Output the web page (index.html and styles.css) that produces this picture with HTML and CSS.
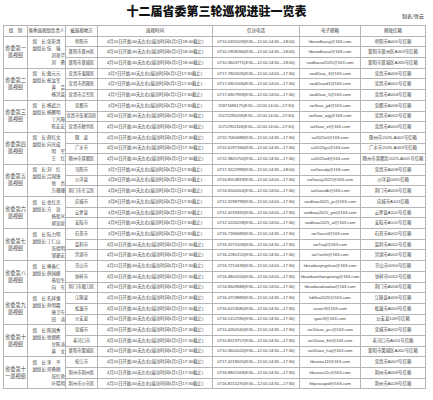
FILE: index.html
```html
<!DOCTYPE html>
<html lang="zh-CN">
<head>
<meta charset="utf-8">
<link rel="stylesheet" href="styles.css">
</head>
<body>
<div class="head">
  <div></div>
  <h1 class="title">十二届省委第三轮巡视进驻一览表</h1>
  <div class="credit">制表/徐云</div>
</div>
<table class="tbl">
  <colgroup>
    <col class="c1"><col class="c2"><col class="c3"><col class="c4"><col class="c5"><col class="c6"><col class="c7">
  </colgroup>
  <thead>
    <tr><th>组　别</th><th>省委巡视组负责人</th><th>被巡视地方</th><th>巡视时间</th><th>信访电话</th><th>电子邮箱</th><th>邮政信箱</th></tr>
  </thead>
  <tbody>
    <tr><td rowspan="3" class="grp">省委第一<br>巡视组</td><td rowspan="3" class="lead"><div>组　长:张彩清</div><div>副组长:伍　强</div><div class="r">刘艳华</div><div class="r">刘　勇</div></td><td class="pl">枣阳市</td><td class="tm">4月10日开始,60天左右(接访时间6月1日18:00截止)</td><td class="ph">0710-6332029(8:30—12:00,14:30—18:00)</td><td class="em">hbswdfaasy@163.com</td><td class="po">枣阳市A001号信箱</td></tr>
    <tr><td class="pl">襄阳市襄州区</td><td class="tm">4月10日开始,60天左右(接访时间6月1日18:00截止)</td><td class="ph">0710-2958266(8:30—12:00,14:30—18:00)</td><td class="em">hbswdfaasz@163.com</td><td class="po">襄阳市襄州区A003号信箱</td></tr>
    <tr><td class="pl">襄阳市襄城区</td><td class="tm">4月10日开始,60天左右(接访时间6月1日18:00截止)</td><td class="ph">0710-3603771(8:30—12:00,14:30—18:00)</td><td class="em">swdfaasx2025@163.com</td><td class="po">襄阳市襄城区A005号信箱</td></tr>

    <tr><td rowspan="3" class="grp">省委第二<br>巡视组</td><td rowspan="3" class="lead"><div>组　长:戴元元</div><div>副组长:祝汝军</div><div class="r">黄　芸</div><div class="r">杨洪英</div></td><td class="pl">宜昌市夷陵区</td><td class="tm">4月7日开始,60天左右(接访时间6月1日17:30截止)</td><td class="ph">0717-7805626(8:30—12:00,14:00—17:30)</td><td class="em">swd2xaz_3@163.com</td><td class="po">宜昌市A005号信箱</td></tr>
    <tr><td class="pl">宜昌市西陵区</td><td class="tm">4月7日开始,60天左右(接访时间6月1日17:30截止)</td><td class="ph">0717-6901006(8:30—12:00,14:00—17:30)</td><td class="em">swd2xaxd1@163.com</td><td class="po">宜昌市A001号信箱</td></tr>
    <tr><td class="pl">宜昌市点军区</td><td class="tm">4月7日开始,60天左右(接访时间6月1日17:30截止)</td><td class="ph">0717-6907959(8:30—12:00,14:00—17:30)</td><td class="em">swd2xaz_5@163.com</td><td class="po">宜昌市A004号信箱</td></tr>

    <tr><td rowspan="3" class="grp">省委第三<br>巡视组</td><td rowspan="3" class="lead"><div>组　长:杨武力</div><div>副组长:杨鹏明</div><div class="r">丁凡障</div><div class="r">陈宏宏</div></td><td class="pl">宜都市</td><td class="tm">4月9日开始,60天左右(接访时间6月1日17:30截止)</td><td class="ph">15971696175(8:30—12:00,14:00—17:30)</td><td class="em">sw3xaz_yd@163.com</td><td class="po">宜都市A006号信箱</td></tr>
    <tr><td class="pl">宜昌市伍家岗区</td><td class="tm">4月10日开始,60天左右(接访时间6月1日17:30截止)</td><td class="ph">15172291033(8:30—12:00,14:00—17:30)</td><td class="em">sw3xaz_wjg@163.com</td><td class="po">宜昌市A002号信箱</td></tr>
    <tr><td class="pl">宜昌市猇亭区</td><td class="tm">4月10日开始,60天左右(接访时间6月1日17:30截止)</td><td class="ph">15712952163(8:30—12:00,14:00—17:30)</td><td class="em">sw3xaz_xt@163.com</td><td class="po">宜昌市A003号信箱</td></tr>

    <tr><td rowspan="3" class="grp">省委第四<br>巡视组</td><td rowspan="3" class="lead"><div>组　长:薛红文</div><div>副组长:向光成</div><div class="r">明　军</div><div class="r">王　红</div></td><td class="pl">随　县</td><td class="tm">4月10日开始,60天左右(接访时间6月1日17:30截止)</td><td class="ph">0722-7060688(8:30—12:00,14:30—17:30)</td><td class="em">sz2025xl@163.com</td><td class="po">随州市2025-A002号信箱</td></tr>
    <tr><td class="pl">广水市</td><td class="tm">4月10日开始,60天左右(接访时间6月1日17:30截止)</td><td class="ph">0722-6297166(8:30—12:00,14:30—17:30)</td><td class="em">sz2025gs@163.com</td><td class="po">广水市2025-A003号信箱</td></tr>
    <tr><td class="pl">随州市曾都区</td><td class="tm">4月10日开始,60天左右(接访时间6月1日17:30截止)</td><td class="ph">0722-3805750(8:30—12:00,14:30—17:30)</td><td class="em">sz2025zd@163.com</td><td class="po">随州市曾都区2025-A001号信箱</td></tr>

    <tr><td rowspan="3" class="grp">省委第五<br>巡视组</td><td rowspan="3" class="lead"><div>组　长:刘　红</div><div>副组长:吕国锋</div><div class="r">徐　亮</div><div class="r">万珊珊</div></td><td class="pl">当阳市</td><td class="tm">4月7日开始,60天左右(接访时间6月1日17:30截止)</td><td class="ph">0717-3222999(8:30—12:00,14:30—18:00)</td><td class="em">sw5xasdy@163.com</td><td class="po">宜昌市A008号信箱</td></tr>
    <tr><td class="pl">沙洋县</td><td class="tm">4月8日开始,60天左右(接访时间6月1日17:30截止)</td><td class="ph">0724-8553819(8:30—12:00,14:00—17:30)</td><td class="em">sw5xasy2025@163.com</td><td class="po">沙洋县0051信箱</td></tr>
    <tr><td class="pl">荆门市东宝区</td><td class="tm">4月8日开始,60天左右(接访时间6月1日17:30截止)</td><td class="ph">0724-6500054(8:30—12:00,14:00—17:30)</td><td class="em">sw5xasdb@163.com</td><td class="po">荆门市A005号信箱</td></tr>

    <tr><td rowspan="3" class="grp">省委第六<br>巡视组</td><td rowspan="3" class="lead"><div>组　长:金红克</div><div>副组长:方　治</div><div class="r">杨祖义</div><div class="r">郭治泉</div></td><td class="pl">应城市</td><td class="tm">4月8日开始,60天左右(接访时间6月1日17:30截止)</td><td class="ph">0712-3298799(8:30—12:00,14:00—17:30)</td><td class="em">swdlxaa2025_yc@163.com</td><td class="po">应城市A101信箱</td></tr>
    <tr><td class="pl">云梦县</td><td class="tm">4月9日开始,60天左右(接访时间6月1日17:30截止)</td><td class="ph">0712-4233332(8:30—12:00,14:00—17:30)</td><td class="em">swdlxaa2025_ym@163.com</td><td class="po">云梦县A101号信箱</td></tr>
    <tr><td class="pl">安陆市</td><td class="tm">4月9日开始,60天左右(接访时间6月1日17:30截止)</td><td class="ph">0712-5226228(8:30—12:00,14:00—17:30)</td><td class="em">swdlxaa2025_al@163.com</td><td class="po">安陆市A101号信箱</td></tr>

    <tr><td rowspan="3" class="grp">省委第七<br>巡视组</td><td rowspan="3" class="lead"><div>组　长:阮力明</div><div>副组长:丁仁山</div><div class="r">张德明</div><div class="r">邹建宏</div></td><td class="pl">石首市</td><td class="tm">4月9日开始,60天左右(接访时间6月1日17:30截止)</td><td class="ph">0716-7186689(8:30—12:00,14:30—17:30)</td><td class="em">sw7xassl@163.com</td><td class="po">石首市A002号信箱</td></tr>
    <tr><td class="pl">监利市</td><td class="tm">4月10日开始,60天左右(接访时间6月1日17:30截止)</td><td class="ph">0716-3270109(8:30—12:00,14:30—17:30)</td><td class="em">sw7xajl@163.com</td><td class="po">监利市A001号信箱</td></tr>
    <tr><td class="pl">洪湖市</td><td class="tm">4月10日开始,60天左右(接访时间6月1日17:30截止)</td><td class="ph">0716-2280155(8:30—12:00,14:30—17:30)</td><td class="em">sw7xahh@163.com</td><td class="po">洪湖市A002号信箱</td></tr>

    <tr><td rowspan="3" class="grp">省委第八<br>巡视组</td><td rowspan="3" class="lead"><div>组　长:熊春仁</div><div>副组长:薛国峰</div><div class="r">蔡钦生</div><div class="r">向　东</div></td><td class="pl">京山市</td><td class="tm">4月11日开始,60天左右(接访时间6月1日17:30截止)</td><td class="ph">0724-7210639(8:30—12:00,14:00—17:30)</td><td class="em">hbswbaxjingshan@163.com</td><td class="po">京山市0050号信箱</td></tr>
    <tr><td class="pl">钟祥市</td><td class="tm">4月10日开始,60天左右(接访时间6月1日17:30截止)</td><td class="ph">0724-4800556(8:30—12:00,14:00—17:30)</td><td class="em">hbswbaxzhongxiang@163.com</td><td class="po">钟祥市0052号信箱</td></tr>
    <tr><td class="pl">荆门市掇刀区</td><td class="tm">4月10日开始,60天左右(接访时间6月1日17:30截止)</td><td class="ph">0724-8609688(8:30—12:00,14:00—17:30)</td><td class="em">hbswbaxduodao@163.com</td><td class="po">荆门市A006号信箱</td></tr>

    <tr><td rowspan="3" class="grp">省委第九<br>巡视组</td><td rowspan="3" class="lead"><div>组　长:孔祥惠</div><div>副组长:孙明霞</div><div class="r">唐卫东</div><div class="r">田　涛</div></td><td class="pl">江陵县</td><td class="tm">4月10日开始,60天左右(接访时间6月1日17:30截止)</td><td class="ph">0716-4759889(8:30—12:00,14:30—17:30)</td><td class="em">hb9xa2025@163.com</td><td class="po">江陵县A005号信箱</td></tr>
    <tr><td class="pl">松滋市</td><td class="tm">4月10日开始,60天左右(接访时间6月1日17:30截止)</td><td class="ph">0716-6223580(8:30—12:00,14:30—17:30)</td><td class="em">szaxc9@163.com</td><td class="po">松滋市A003号信箱</td></tr>
    <tr><td class="pl">公安县</td><td class="tm">4月10日开始,60天左右(接访时间6月1日17:30截止)</td><td class="ph">0716-5152590(8:30—12:00,14:30—17:30)</td><td class="em">gaxc9@163.com</td><td class="po">公安县108号信箱</td></tr>

    <tr><td rowspan="3" class="grp">省委第十<br>巡视组</td><td rowspan="3" class="lead"><div>组　长:陈国秀</div><div>副组长:徐朝辉</div><div class="r">甘陈涛</div><div class="r">黄　文</div></td><td class="pl">宜城市</td><td class="tm">4月10日开始,60天左右(接访时间6月1日17:30截止)</td><td class="ph">0710-4260540(8:30—12:00,14:30—17:30)</td><td class="em">sw10axz_ycs@163.com</td><td class="po">宜城市A002号信箱</td></tr>
    <tr><td class="pl">老河口市</td><td class="tm">4月10日开始,60天左右(接访时间6月1日17:30截止)</td><td class="ph">0710-8223757(8:30—12:00,14:30—17:30)</td><td class="em">sw10axz_lhk@163.com</td><td class="po">老河口市A001号信箱</td></tr>
    <tr><td class="pl">襄阳市樊城区</td><td class="tm">4月10日开始,60天左右(接访时间6月1日17:30截止)</td><td class="ph">0710-3600520(8:30—12:00,14:30—17:30)</td><td class="em">sw10axz_fcq@163.com</td><td class="po">襄阳市樊城区A002号信箱</td></tr>

    <tr><td rowspan="3" class="grp">省委第十<br>一巡视组</td><td rowspan="3" class="lead"><div>组　长:李　平</div><div>副组长:邓勇刚</div><div class="r">张红艳</div><div class="r">叶晓明</div></td><td class="pl">枝江市</td><td class="tm">4月10日开始,60天左右(接访时间6月1日17:30截止)</td><td class="ph">0717-4218025(8:30—12:00,14:30—17:30)</td><td class="em">hbswxa11f@163.com</td><td class="po">宜昌市A007号信箱</td></tr>
    <tr><td class="pl">荆州市荆州区</td><td class="tm">4月11日开始,60天左右(接访时间6月1日17:30截止)</td><td class="ph">0716-8801569(8:30—12:00,14:30—17:30)</td><td class="em">hbswxa11s@163.com</td><td class="po">荆州市A009号信箱</td></tr>
    <tr><td class="pl">荆州市沙市区</td><td class="tm">4月11日开始,60天左右(接访时间6月1日17:30截止)</td><td class="ph">0716-8210270(8:30—12:00,14:30—17:30)</td><td class="em">hbjzxasqxd@163.com</td><td class="po">荆州市A028号信箱</td></tr>
  </tbody>
</table>
</body>
</html>
```
FILE: styles.css
```css
html, body {
  margin: 0;
  padding: 0;
  background: #fff;
}
body {
  width: 433px;
  font-family: "Liberation Sans", "Noto Sans CJK SC", sans-serif;
  color: #444;
}
.head {
  display: grid;
  grid-template-columns: 1fr auto 1fr;
  height: 25px;
  align-items: end;
}
.title {
  margin: 0 0 4px 0;
  font-family: "Noto Sans CJK SC", sans-serif;
  font-weight: 900;
  font-size: 12px;
  line-height: 14px;
  color: #111;
  align-self: center;
}
.credit {
  justify-self: end;
  font-family: "Noto Sans CJK SC", sans-serif;
  font-size: 5px;
  line-height: 6px;
  margin: 0 9px 6px 0;
  color: #333;
}
.tbl {
  margin-left: 3px;
  width: 422px;
  border-collapse: collapse;
  table-layout: fixed;
  font-size: 4.6px;
  line-height: 6px;
}
.c1 { width: 24px; }
.c2 { width: 38px; }
.c3 { width: 32px; }
.c4 { width: 115px; }
.c5 { width: 87px; }
.c6 { width: 61px; }
.c7 { width: 65px; }
.tbl th, .tbl td {
  border: 1px solid #b5b5b5;
  padding: 0;
  text-align: center;
  vertical-align: middle;
  white-space: nowrap;
  font-weight: normal;
  font-family: "Liberation Sans", "Noto Sans CJK SC", sans-serif;
}
.tbl tr { height: 10.7px; }
.tbl th { color: #333; font-size: 4.5px; }
.grp { font-size: 5.2px; line-height: 7px; }
.lead {
  text-align: left;
  padding: 0 2px 0 4px;
  line-height: 7px;
  font-size: 4.5px;
}
.lead .r { text-align: right; }
.pl { font-size: 4.3px; }
.tm { font-size: 4.4px; letter-spacing: -0.05px; }
.ph { font-size: 4.3px; letter-spacing: -0.1px; }
.em { font-size: 4.3px; letter-spacing: -0.05px; }
.po { font-size: 4.4px; }
```
